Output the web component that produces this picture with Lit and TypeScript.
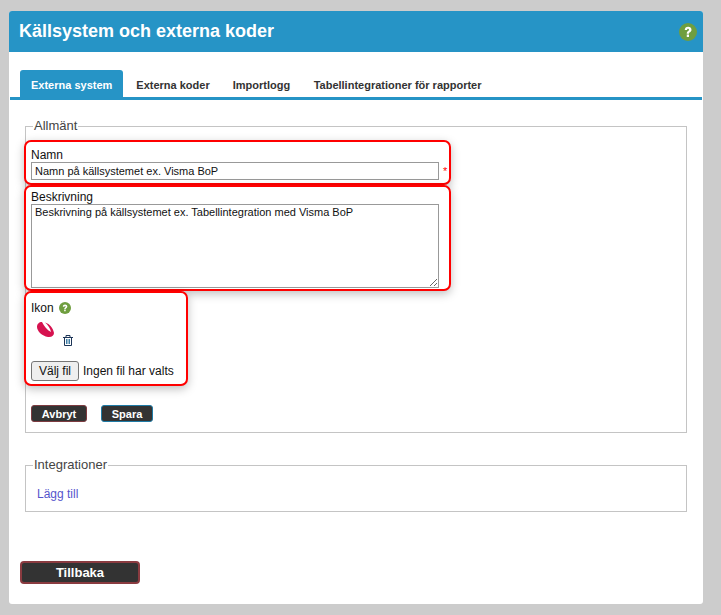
import { LitElement, html, css } from "lit";
import { customElement } from "lit/decorators.js";

const helpIcon = html`<svg viewBox="0 0 16 16" width="18" height="18"><circle cx="8" cy="8" r="8" fill="#6f9e3f"></circle><path d="M5.100 6.200C5.100 4.400 6.400 3.300 8.100 3.300c1.800 0 3 1 3 2.600 0 1.200-.7 1.800-1.400 2.300-.6.400-.8.700-.8 1.300H6.900c0-1.200.4-1.800 1.200-2.300.5-.4.800-.7.800-1.200 0-.5-.3-.8-.8-.8-.6 0-.9.400-.9 1H5.100zM6.900 10.300h2v2.100h-2z" fill="#fff"></path></svg>`;

@customElement("app-root")
export class AppRoot extends LitElement {
  static styles = css`
    :host { display: block; background: #cccccc; height: 615px; overflow: hidden; padding: 11px 18px 11px 9px; box-sizing: border-box; font-family: "Liberation Sans", Arial, sans-serif; font-size: 12px; color: #111; }
    .card { background: #fff; height: 593px; border-radius: 3px; overflow: hidden; display: flex; flex-direction: column; }
    .head { background: #2694c6; height: 41px; display: flex; align-items: center; justify-content: space-between; padding: 0 6px 0 10px; flex: none; }
    h1 { margin: 0; font-size: 18px; font-weight: bold; color: #fff; }
    .head svg { display: block; margin-top: 1px; }
    .tabs { display: flex; margin: 18px 1px 0 1px; padding-left: 10px; border-bottom: 3px solid #2694c6; height: 27px; flex: none; }
    .tab { padding: 2px 11.5px 0; display: flex; align-items: center; font-size: 11px; font-weight: bold; color: #333; border-radius: 3px 3px 0 0; }
    .tab.on { background: #2694c6; color: #fff; padding: 2px 11px 0; }
    .tab:nth-child(2) { padding-left: 13px; }
    .tab:nth-child(4) { padding-left: 12px; }
    .body { display: flex; flex-direction: column; padding: 0 16px 0 16px; flex: 1; }
    fieldset { margin: 0; padding: 0; border: 1px solid #c4c4c4; min-width: 0; }
    legend { margin-left: 7px; padding: 0 1px; font-size: 13px; line-height: 14px; color: #444; }
    .general { margin-top: 19px; height: 314px; box-sizing: border-box; display: flex; flex-direction: column; }
    .box { border: 2px solid #f00; border-radius: 7px; box-shadow: 0 3px 10px rgba(0,0,0,.25); margin-left: -2px; padding: 0 5px; box-sizing: border-box; background: #fff; }
    .name { width: 427px; height: 45px; margin-top: 7px; }
    .desc { width: 427px; height: 106px; }
    .icon { width: 164px; height: 95px; }
    label { display: block; line-height: 14px; }
    .name label { margin-top: 6px; }
    .desc label { margin-top: 3px; }
    .row { display: flex; align-items: flex-start; }
    input.text, textarea { font: 11px "Liberation Sans", Arial, sans-serif; color: #111; border: 1px solid #999; margin: 0; padding: 1px 3px; box-sizing: border-box; width: 408px; flex: none; display: block; background: #fff; border-radius: 0; }
    input.text { height: 18px; }
    textarea { height: 84px; }
    .req { color: #f00; font-size: 11px; margin-left: 4px; line-height: 18px; }
    .ikon { display: flex; align-items: center; gap: 5px; margin-top: 7px; line-height: 16px; }
    .ikon svg { width: 12px; height: 12px; display: block; }
    .pics { display: flex; height: 40px; }
    .logo { margin: 6px 0 0 6px; display: block; }
    .trash { margin: 19px 0 0 9px; display: block; }
    .file { display: flex; align-items: center; gap: 4px; margin-top: 5px; }
    .file button { font: 12px "Liberation Sans", Arial, sans-serif; width: 48px; height: 20px; padding: 0; border: 1px solid #767676; border-radius: 3px; background: #efefef; color: #111; }
    .actions { display: flex; gap: 14px; margin: 19px 0 0 5px; }
    .btn { background: #333; color: #fff; font: bold 11px "Liberation Sans", Arial, sans-serif; height: 17px; border-radius: 3px; padding: 0; box-sizing: border-box; }
    .cancel { width: 56px; border: 1px solid #7d3b40; }
    .save { width: 52px; border: 1px solid #1f7ba6; }
    .integ { margin-top: 25px; height: 54px; box-sizing: border-box; }
    .integ a { display: block; margin: 15px 0 0 11px; color: #5555cc; line-height: 14px; }
    .back { margin: 49px 0 0 -5px; align-self: flex-start; width: 120px; height: 23px; background: #333; color: #fff; font: bold 13px "Liberation Sans", Arial, sans-serif; border: 2px solid #8a3b40; border-radius: 4px; padding: 0; box-sizing: border-box; }
  `;

  render() {
    return html`<div class="card">
      <div class="head"><h1>Källsystem och externa koder</h1>${helpIcon}</div>
      <div class="tabs">
        <div class="tab on">Externa system</div>
        <div class="tab">Externa koder</div>
        <div class="tab">Importlogg</div>
        <div class="tab">Tabellintegrationer för rapporter</div>
      </div>
      <div class="body">
        <fieldset class="general">
          <legend>Allmänt</legend>
          <div class="box name">
            <label>Namn</label>
            <div class="row"><input class="text" .value=${"Namn på källsystemet ex. Visma BoP"} /><span class="req">*</span></div>
          </div>
          <div class="box desc">
            <label>Beskrivning</label>
            <textarea .value=${"Beskrivning på källsystemet ex. Tabellintegration med Visma BoP"}></textarea>
          </div>
          <div class="box icon">
            <div class="ikon">Ikon ${helpIcon}</div>
            <div class="pics">
              <svg class="logo" width="17" height="16" viewBox="0 0 17 16"><path d="M5 0C2 0 0 2 0 5C0 9 5 14 11 15C15 15.500 17 13 17 11C16 6 13 2 8 .5C11 3 13.500 7 14 10C10 8 7 4 5 0Z" fill="#d6124f"></path></svg>
              <svg class="trash" width="10" height="11" viewBox="0 0 10 11" fill="none" stroke="#1d3557"><path d="M0 2.500h10M3 2.500V.5h4v2M1.500 2.500v8h7v-8"></path><path d="M3.500 4v5M5 4v5M6.500 4v5" stroke="#3f7fa6"></path></svg>
            </div>
            <div class="file"><button>Välj fil</button><span>Ingen fil har valts</span></div>
          </div>
          <div class="actions"><button class="btn cancel">Avbryt</button><button class="btn save">Spara</button></div>
        </fieldset>
        <fieldset class="integ">
          <legend>Integrationer</legend>
          <a>Lägg till</a>
        </fieldset>
        <button class="back">Tillbaka</button>
      </div>
    </div>`;
  }
}
